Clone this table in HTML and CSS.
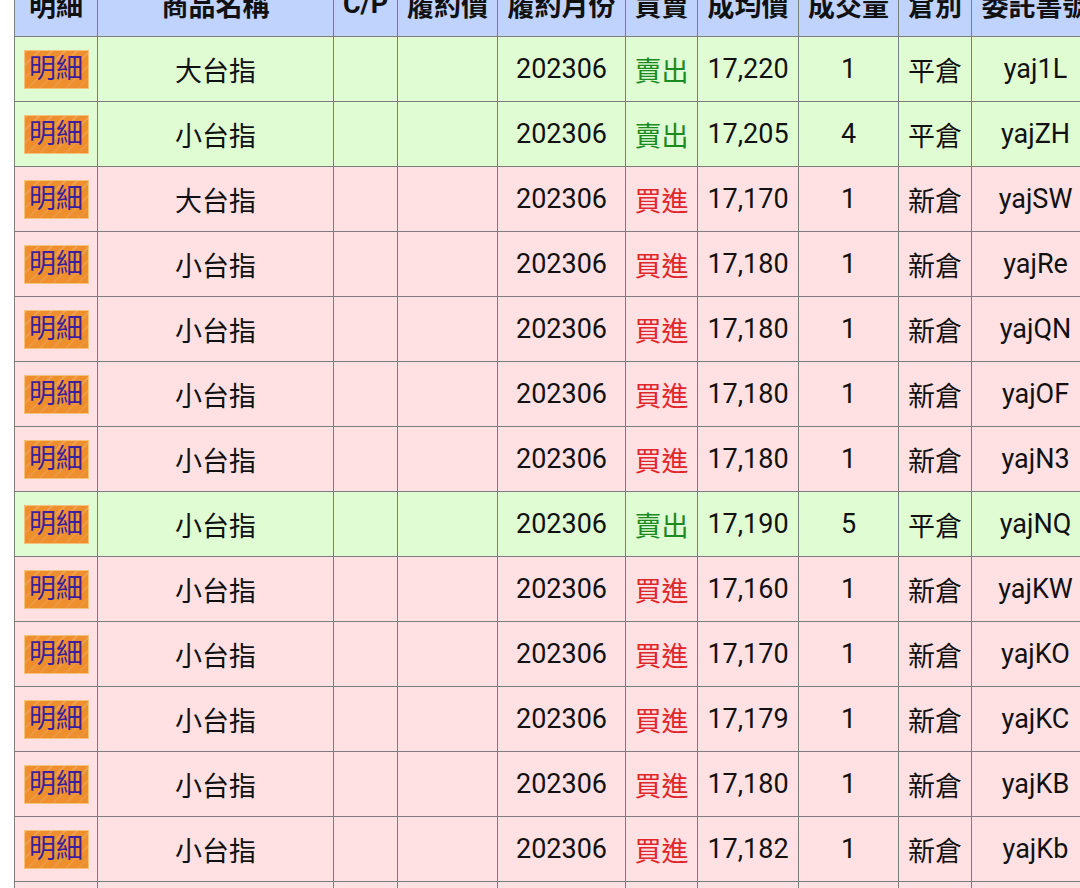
FILE: index.html
```html
<!DOCTYPE html>
<html lang="zh-Hant">
<head>
<meta charset="utf-8">
<title>成交明細</title>
<link rel="stylesheet" href="styles.css">
</head>
<body>
<div class="page">
<table class="deals">
<colgroup>
<col class="c-btn"><col class="c-name"><col class="c-cp"><col class="c-strike"><col class="c-month"><col class="c-side"><col class="c-price"><col class="c-qty"><col class="c-pos"><col class="c-order">
</colgroup>
<thead>
<tr><th>明細</th><th>商品名稱</th><th>C/P</th><th>履約價</th><th>履約月份</th><th>買賣</th><th>成均價</th><th>成交量</th><th>倉別</th><th>委託書號</th></tr>
</thead>
<tbody>
<tr class="sell"><td><span class="btn">明細</span></td><td>大台指</td><td></td><td></td><td>202306</td><td class="side">賣出</td><td>17,220</td><td>1</td><td>平倉</td><td>yaj1L</td></tr>
<tr class="sell"><td><span class="btn">明細</span></td><td>小台指</td><td></td><td></td><td>202306</td><td class="side">賣出</td><td>17,205</td><td>4</td><td>平倉</td><td>yajZH</td></tr>
<tr class="buy"><td><span class="btn">明細</span></td><td>大台指</td><td></td><td></td><td>202306</td><td class="side">買進</td><td>17,170</td><td>1</td><td>新倉</td><td>yajSW</td></tr>
<tr class="buy"><td><span class="btn">明細</span></td><td>小台指</td><td></td><td></td><td>202306</td><td class="side">買進</td><td>17,180</td><td>1</td><td>新倉</td><td>yajRe</td></tr>
<tr class="buy"><td><span class="btn">明細</span></td><td>小台指</td><td></td><td></td><td>202306</td><td class="side">買進</td><td>17,180</td><td>1</td><td>新倉</td><td>yajQN</td></tr>
<tr class="buy"><td><span class="btn">明細</span></td><td>小台指</td><td></td><td></td><td>202306</td><td class="side">買進</td><td>17,180</td><td>1</td><td>新倉</td><td>yajOF</td></tr>
<tr class="buy"><td><span class="btn">明細</span></td><td>小台指</td><td></td><td></td><td>202306</td><td class="side">買進</td><td>17,180</td><td>1</td><td>新倉</td><td>yajN3</td></tr>
<tr class="sell"><td><span class="btn">明細</span></td><td>小台指</td><td></td><td></td><td>202306</td><td class="side">賣出</td><td>17,190</td><td>5</td><td>平倉</td><td>yajNQ</td></tr>
<tr class="buy"><td><span class="btn">明細</span></td><td>小台指</td><td></td><td></td><td>202306</td><td class="side">買進</td><td>17,160</td><td>1</td><td>新倉</td><td>yajKW</td></tr>
<tr class="buy"><td><span class="btn">明細</span></td><td>小台指</td><td></td><td></td><td>202306</td><td class="side">買進</td><td>17,170</td><td>1</td><td>新倉</td><td>yajKO</td></tr>
<tr class="buy"><td><span class="btn">明細</span></td><td>小台指</td><td></td><td></td><td>202306</td><td class="side">買進</td><td>17,179</td><td>1</td><td>新倉</td><td>yajKC</td></tr>
<tr class="buy"><td><span class="btn">明細</span></td><td>小台指</td><td></td><td></td><td>202306</td><td class="side">買進</td><td>17,180</td><td>1</td><td>新倉</td><td>yajKB</td></tr>
<tr class="buy"><td><span class="btn">明細</span></td><td>小台指</td><td></td><td></td><td>202306</td><td class="side">買進</td><td>17,182</td><td>1</td><td>新倉</td><td>yajKb</td></tr>
<tr class="buy"><td><span class="btn">明細</span></td><td>小台指</td><td></td><td></td><td>202306</td><td class="side">買進</td><td>17,180</td><td>1</td><td>新倉</td><td>yajKa</td></tr>
</tbody>
</table>
</div>
</body>
</html>
```

FILE: styles.css
```css
html, body {
  margin: 0;
  padding: 0;
  background: #ffffff;
  overflow: hidden;
}

.page {
  padding-left: 14px;
  margin-top: -29px;
  font-family: Roboto, "Noto Sans CJK TC", sans-serif;
  font-size: 27px;
  color: #111111;
}

.deals {
  border-collapse: collapse;
  table-layout: fixed;
  width: 1085px;
}

.c-btn { width: 83px; }
.c-name { width: 236px; }
.c-cp { width: 64px; }
.c-strike { width: 100px; }
.c-month { width: 128px; }
.c-side { width: 72px; }
.c-price { width: 101px; }
.c-qty { width: 100px; }
.c-pos { width: 73px; }
.c-order { width: 128px; }

.deals th,
.deals td {
  border: 1px solid #7d7d7d;
  height: 64px;
  padding: 0;
  text-align: center;
  vertical-align: middle;
  white-space: nowrap;
  overflow: hidden;
}

.deals th {
  background: #bfd3fd;
  font-weight: 700;
}

.sell td { background: #e0fcd3; }
.buy td { background: #ffe0e3; }

.sell .side { color: #1b8a1f; }
.buy .side { color: #e0262a; }

.btn {
  display: inline-block;
  width: 63px;
  height: 37px;
  line-height: 37px;
  border: 1px solid #f6c27a;
  background-color: #ee8f2e;
  background-image:
    linear-gradient(180deg, rgba(238, 143, 46, 0) 0%, rgba(238, 143, 46, 0.6) 100%),
    repeating-linear-gradient(135deg, rgba(255, 255, 255, 0.16) 0 2px, rgba(255, 255, 255, 0) 2px 9px);
  color: #3b1f9c;
  font-size: 27px;
  vertical-align: middle;
}
```
